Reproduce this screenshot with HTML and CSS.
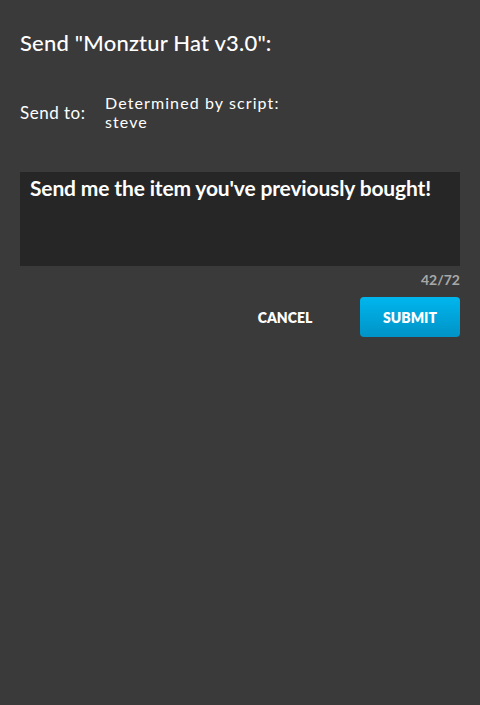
FILE: index.html
```html
<!DOCTYPE html>
<html>
<head>
<meta charset="utf-8">
<link rel="stylesheet" href="styles.css">
</head>
<body>
<div class="dialog">
  <h1 class="title">Send "Monztur Hat v3.0":</h1>
  <div class="send-row">
    <span class="send-label">Send to:</span>
    <div class="send-value">
      <div>Determined by script:</div>
      <div>steve</div>
    </div>
  </div>
  <div class="message">Send me the item you've previously bought!</div>
  <div class="counter">42/72</div>
  <div class="actions">
    <button class="btn cancel">CANCEL</button>
    <button class="btn submit">SUBMIT</button>
  </div>
</div>
</body>
</html>
```

FILE: styles.css
```css
html, body {
  margin: 0;
  padding: 0;
  background: #3a3a3a;
  height: 100%;
}
.dialog {
  padding: 30px 20px 0 20px;
  font-family: Lato, "Open Sans", sans-serif;
  color: #ffffff;
}
.title {
  margin: 0;
  font-size: 22px;
  font-weight: 500;
  line-height: 26px;
  letter-spacing: 0.2px;
}
.send-row {
  display: flex;
  align-items: center;
  margin-top: 37px;
}
.send-label {
  font-size: 17px;
  width: 85px;
  letter-spacing: 0.5px;
}
.send-value {
  font-size: 16px;
  line-height: 19px;
  letter-spacing: 1.1px;
}
.message {
  margin-top: 41px;
  background: #262626;
  height: 94px;
  box-sizing: border-box;
  padding: 3px 10px;
  font-family: Lato, sans-serif;
  font-weight: 700;
  font-size: 21px;
  line-height: 26px;
  letter-spacing: -0.15px;
}
.counter {
  text-align: right;
  font-size: 14px;
  font-weight: 700;
  color: #a8a8a8;
  margin-top: 5px;
  line-height: 18px;
}
.actions {
  display: flex;
  justify-content: flex-end;
  gap: 30px;
  margin-top: 8px;
}
.btn {
  font-family: Lato, sans-serif;
  font-weight: 800;
  font-size: 14px;
  color: #ffffff;
  border: none;
  width: 100px;
  height: 40px;
  border-radius: 4px;
  background: transparent;
  padding: 0;
}
.cancel {
  width: 90px;
}
.submit {
  background: linear-gradient(#00b6ee, #0093c6);
}
```
